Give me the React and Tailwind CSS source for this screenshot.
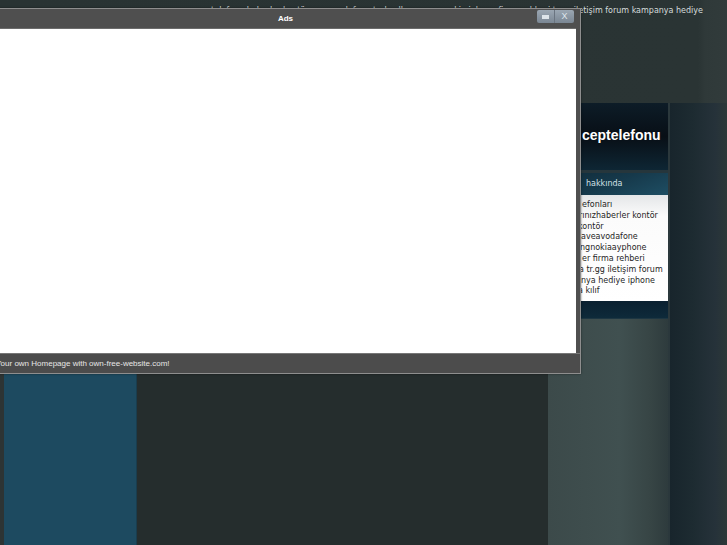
import React from 'react';

const sideLinks = [
  { text: 'efonları', ml: 'ml-[34px]' },
  { text: 'rınızhaberler kontör', ml: 'ml-[31px]' },
  { text: 'kontör', ml: 'ml-[30px]' },
  { text: 'aveavodafone', ml: 'ml-[33px]' },
  { text: 'ngnokiaayphone', ml: 'ml-[32px]' },
  { text: 'er firma rehberi', ml: 'ml-[34px]' },
  { text: 'a tr.gg iletişim forum', ml: 'ml-[31px]' },
  { text: 'nya hediye iphone', ml: 'ml-[33px]' },
  { text: 'a kılıf', ml: 'ml-[30px]' },
];

const AdsWindow = () => (
  <div className="absolute left-[-10px] top-[8px] w-[591px] h-[366px] flex flex-col border border-[#8e8e8e] bg-[#4f4f4f] shadow-[0_0_2px_rgba(0,0,0,0.5)]">
    <div className="relative h-[19px] flex items-center justify-center">
      <span className="text-[8px] font-bold text-white font-['Liberation_Sans',Arial,sans-serif] leading-none">Ads</span>
      <div className="absolute right-[6px] top-[1px] flex h-[13px]">
        <div className="w-[18px] h-full flex items-center justify-center rounded-l-[2px] bg-[linear-gradient(#9ba7b3,#7a8693)] border-r border-[#6a7480]">
          <div className="w-[7px] h-[4px] bg-[#dde4ea]" />
        </div>
        <div className="w-[19px] h-full flex items-center justify-center rounded-r-[2px] bg-[linear-gradient(#9ba7b3,#7a8693)]">
          <span className="text-[9px] leading-none text-[#dfe6ec] font-['Liberation_Sans',Arial,sans-serif]">X</span>
        </div>
      </div>
    </div>
    <div className="mx-[4px] flex-1 bg-white border-t border-[#6c6c6c]" />
    <div className="h-[20px] flex items-center px-[5px] bg-[#4c4c4c] border-t border-[#777]">
      <span className="text-[8px] leading-none text-[#e6e6e6] font-['Liberation_Sans',Arial,sans-serif] whitespace-nowrap">
        Your own Homepage with own-free-website.com!
      </span>
    </div>
  </div>
);

const App = () => {
  return (
    <div className="relative w-[727px] h-[545px] overflow-hidden bg-[linear-gradient(to_right,#293333_0%,#2a3434_96%,#2f3939_97%,#313b3b_100%)] font-['DejaVu_Sans',sans-serif]">
      <div className="h-[103px] pt-[6px] pr-[24px] flex justify-end">
        <p className="text-[8px] leading-[10px] text-[#d6dcdc] whitespace-nowrap">
          cep telefonu haberler kontör avea vodafone turkcell samsung nokia iphone firma rehberi tr.gg iletişim forum kampanya hediye
        </p>
      </div>

      <div className="flex h-[442px]">
        <div className="w-[4px] bg-[#2d3434]" />
        <div className="w-[133px] bg-[#1d4a60] border-r border-[#1a3d4e]" />
        <div className="w-[411px] bg-[#252d2d]" />
        <div className="w-[122px] flex flex-col bg-[linear-gradient(to_right,#3c4a4a_0%,#405050_60%,#374545_85%,#2e3b3d_100%)] border-r-2 border-[#2b383c]">
          <div className="h-[67px] pt-[20px] bg-[linear-gradient(#0d1c27,#080f16_50%,#0e2634)]">
            <span className="ml-[34px] text-[14px] leading-[18px] font-bold text-white font-['Liberation_Sans',Arial,sans-serif] whitespace-nowrap">ceptelefonu</span>
          </div>
          <div className="h-[3px] bg-[#26363c]" />
          <div className="h-[22px] flex items-center bg-[linear-gradient(160deg,#0f2a38_0%,#16394b_50%,#1e4e63_100%)]">
            <span className="ml-[38px] text-[8px] leading-none text-[#d2e0e6] whitespace-nowrap">hakkında</span>
          </div>
          <div className="h-[106px] pt-[5px] flex flex-col bg-[linear-gradient(#e4e6e8,#fbfbfb_20%,#ffffff)]">
            {sideLinks.map((link) => (
              <span key={link.text} className={`${link.ml} text-[8px] leading-[10.8px] text-[#1e1e1e] whitespace-nowrap`}>
                {link.text}
              </span>
            ))}
          </div>
          <div className="h-[18px] bg-[linear-gradient(#0a2030,#0e2a3a)] border-b border-[#1d3642]" />
        </div>
        <div className="flex-1 bg-[linear-gradient(to_right,#18252c_0%,#1d2b31_40%,#26323a_80%,#2c3838_100%)]" />
      </div>

      <AdsWindow />
    </div>
  );
};

export default App;
